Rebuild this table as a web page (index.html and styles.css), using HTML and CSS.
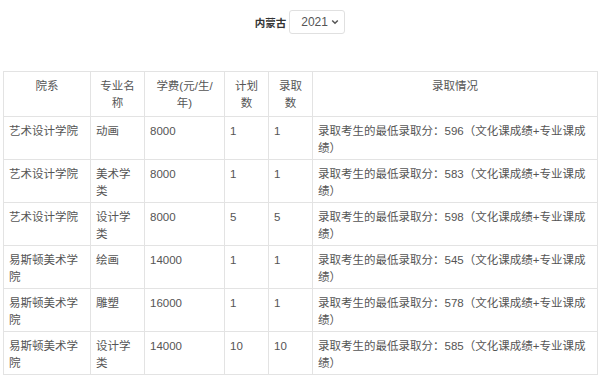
FILE: index.html
```html
<!DOCTYPE html>
<html lang="zh">
<head>
<meta charset="utf-8">
<link rel="stylesheet" href="styles.css">
</head>
<body>
<div class="filter">
  <span class="prov">内蒙古</span>
  <span class="sel-wrap">
    <select class="sel"><option>2021</option></select>
    <svg class="chev" width="8" height="6" viewBox="0 0 8 6"><path d="M1.2 1.5 L4 4.3 L6.8 1.5" fill="none" stroke="#555" stroke-width="1.5"/></svg>
  </span>
</div>
<table class="tbl">
  <colgroup>
    <col class="c1"><col class="c2"><col class="c3"><col class="c4"><col class="c5"><col class="c6">
  </colgroup>
  <thead>
    <tr><th>院系</th><th>专业名称</th><th>学费(元/生/年)</th><th>计划数</th><th>录取数</th><th>录取情况</th></tr>
  </thead>
  <tbody>
    <tr><td>艺术设计学院</td><td>动画</td><td>8000</td><td>1</td><td>1</td><td>录取考生的最低录取分：596（文化课成绩+专业课成绩）</td></tr>
    <tr><td>艺术设计学院</td><td>美术学类</td><td>8000</td><td>1</td><td>1</td><td>录取考生的最低录取分：583（文化课成绩+专业课成绩）</td></tr>
    <tr><td>艺术设计学院</td><td>设计学类</td><td>8000</td><td>5</td><td>5</td><td>录取考生的最低录取分：598（文化课成绩+专业课成绩）</td></tr>
    <tr><td>易斯顿美术学院</td><td>绘画</td><td>14000</td><td>1</td><td>1</td><td>录取考生的最低录取分：545（文化课成绩+专业课成绩）</td></tr>
    <tr><td>易斯顿美术学院</td><td>雕塑</td><td>16000</td><td>1</td><td>1</td><td>录取考生的最低录取分：578（文化课成绩+专业课成绩）</td></tr>
    <tr><td>易斯顿美术学院</td><td>设计学类</td><td>14000</td><td>10</td><td>10</td><td>录取考生的最低录取分：585（文化课成绩+专业课成绩）</td></tr>
  </tbody>
</table>
</body>
</html>
```
FILE: styles.css
```css
html, body {
  margin: 0;
  padding: 0;
  background: #fff;
}
body {
  font-family: "Liberation Sans", "Noto Sans CJK SC", sans-serif;
  font-size: 11.5px;
  color: #555;
}
.filter {
  display: flex;
  justify-content: center;
  align-items: center;
  gap: 3px;
  padding-top: 10px;
  height: 24px;
}
.prov {
  font-weight: bold;
  color: #333;
  font-size: 10.5px;
}
.sel-wrap {
  position: relative;
  display: inline-block;
  height: 24px;
}
.sel {
  -webkit-appearance: none;
  appearance: none;
  width: 56px;
  height: 24px;
  box-sizing: border-box;
  border: 1px solid #e0e0e0;
  border-radius: 3px;
  background: #fff;
  font-family: "Liberation Sans", sans-serif;
  font-size: 12px;
  color: #555;
  padding: 0 0 0 11px;
  margin: 0;
}
.chev {
  position: absolute;
  right: 6px;
  top: 9px;
  pointer-events: none;
}
.tbl {
  margin: 37px 0 0 3px;
  width: 594px;
  table-layout: fixed;
  border-collapse: collapse;
}
.c1 { width: 87px; }
.c2 { width: 54px; }
.c3 { width: 80px; }
.c4 { width: 44px; }
.c5 { width: 44px; }
.c6 { width: 285px; }
.tbl th, .tbl td {
  border: 1px solid #e3e3e3;
  vertical-align: top;
  line-height: 17px;
  word-break: break-all;
}
.tbl th {
  font-weight: normal;
  text-align: center;
  padding: 6px 5px 4px;
  height: 34px;
}
.tbl td {
  text-align: left;
  padding: 6px 5px 2px;
  height: 34px;
}
```
